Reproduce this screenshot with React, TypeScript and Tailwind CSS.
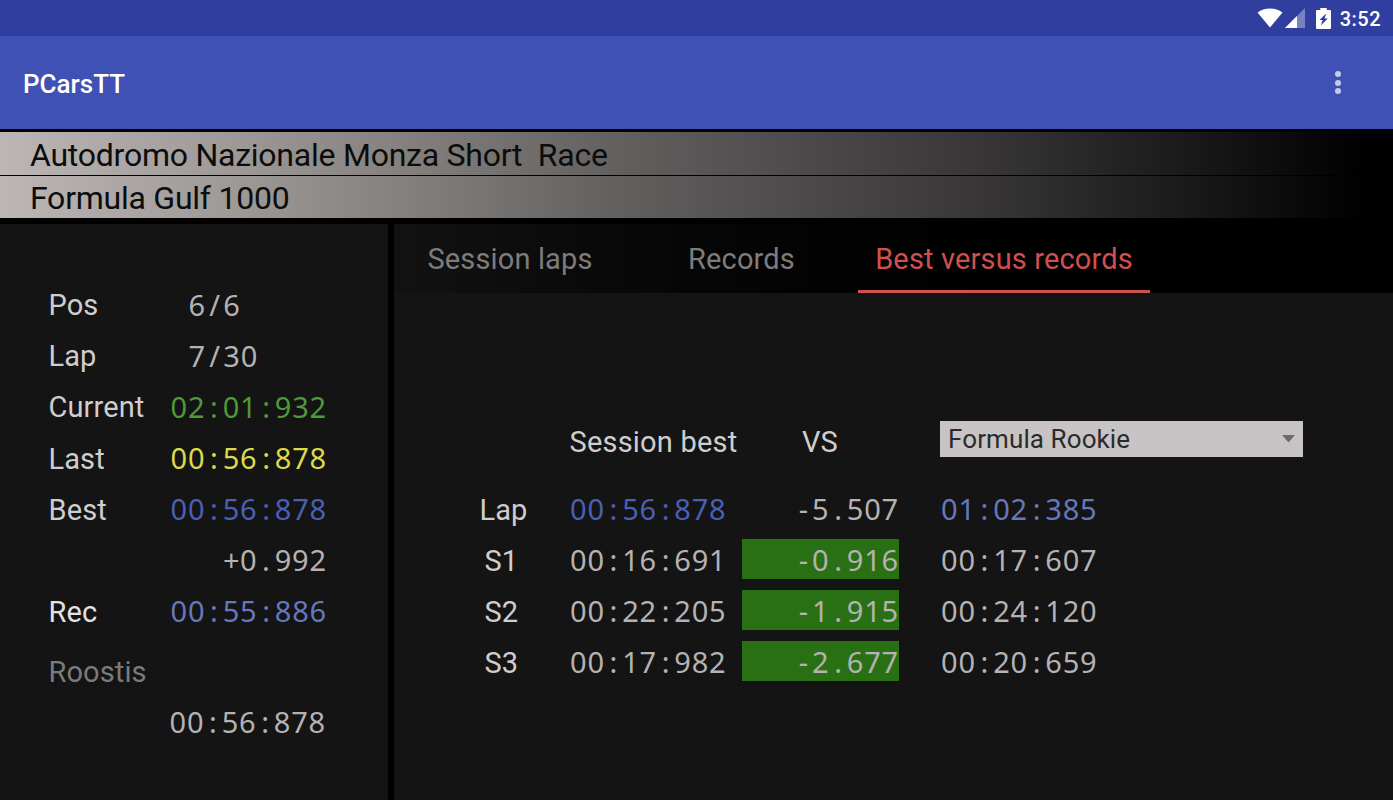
import clsx from 'clsx';

interface ITimingRow {
  label?: string;
  value: string;
  labelClass?: string;
  valueClass: string;
}

interface ISectorRow {
  label: string;
  best: string;
  delta: string;
  record: string;
  isLap?: boolean;
}

const TIMING_ROWS: ITimingRow[] = [
  { label: 'Pos', value: '6/6', valueClass: 'pl-[18px] text-[#b4b2b2]' },
  { label: 'Lap', value: '7/30', valueClass: 'pl-[18px] text-[#b4b2b2]' },
  { label: 'Current', value: '02:01:932', valueClass: 'text-[#4d9a37]' },
  { label: 'Last', value: '00:56:878', valueClass: 'text-[#dcd94c]' },
  { label: 'Best', value: '00:56:878', valueClass: 'text-[#4a5fb8]' },
  { value: '+0.992', valueClass: 'pl-[52px] text-[#b4b2b2]' },
  { label: 'Rec', value: '00:55:886', labelClass: 'text-[#e4e1e1]', valueClass: 'text-[#6678bc]' },
];

const SECTOR_ROWS: ISectorRow[] = [
  { label: 'Lap', best: '00:56:878', delta: '-5.507', record: '01:02:385', isLap: true },
  { label: 'S1', best: '00:16:691', delta: '-0.916', record: '00:17:607' },
  { label: 'S2', best: '00:22:205', delta: '-1.915', record: '00:24:120' },
  { label: 'S3', best: '00:17:982', delta: '-2.677', record: '00:20:659' },
];

// Fixed-pitch digits: punctuation gets the same cell width as a digit.
function Mono({ text, className }: { text: string; className?: string }): React.ReactElement {
  return (
    <span className={clsx("whitespace-nowrap font-['Noto_Sans','Open_Sans',sans-serif] text-[29px] tracking-[0.8px]", className)}>
      {text.split(/([^0-9])/).map((part, i) =>
        /^[^0-9]$/.test(part) ? (
          <span key={i} className="inline-block w-[17.4px] text-center tracking-normal">{part}</span>
        ) : (
          part
        ),
      )}
    </span>
  );
}

function StatusBar(): React.ReactElement {
  return (
    <div className="flex h-9 items-center justify-end bg-[#303f9f] pr-3 text-white">
      <svg width="26" height="20" viewBox="0 0 26 20" fill="currentColor">
        <path d="M0.500 4.600C4 1.900 8.300 0.500 13 0.500S22 1.900 25.500 4.600L13 19.600Z" />
      </svg>
      <svg className="ml-0.5" width="20" height="20" viewBox="0 0 20 20" fill="currentColor">
        <path d="M20 0V20H0Z" fillOpacity="0.35" />
        <path d="M12 8V20H0Z" />
      </svg>
      <svg className="ml-[11px]" width="15" height="21" viewBox="0 0 14 21" preserveAspectRatio="none" fill="currentColor">
        <path fillRule="evenodd" d="M4 0H10V2H13Q14 2 14 3V20Q14 21 13 21H1Q0 21 0 20V3Q0 2 1 2H4ZM9.500 5.500L3.200 12H6.200L4.500 17.500L11 10.500H8Z" />
      </svg>
      <span className="ml-[9px] pt-0.5 text-xl font-medium tracking-[0.5px]">3:52</span>
    </div>
  );
}

function AppBar(): React.ReactElement {
  return (
    <div className="flex h-[93px] items-center justify-between bg-[#3f51b5] pl-[23px] pr-[52px]">
      <h1 className="pt-[3px] text-[26px] font-medium text-white">PCarsTT</h1>
      <div className="flex flex-col gap-[2.500px]">
        <i className="size-1.5 rounded-full bg-[#c5cbe9]" />
        <i className="size-1.5 rounded-full bg-[#c5cbe9]" />
        <i className="size-1.5 rounded-full bg-[#c5cbe9]" />
      </div>
    </div>
  );
}

function TitleRow({ children }: { children: string }): React.ReactElement {
  return (
    <div className="flex items-center whitespace-pre bg-[linear-gradient(to_right,#bcb6b5_0%,#9d9997_17%,#83807e_29%,#656361_43%,#4b494a_58%,#353334_72%,#1c1c1c_84%,#000_98%)] pl-[30px] pt-0.5 text-[32px] tracking-[-0.240px] text-[#0c0c0c]">
      {children}
    </div>
  );
}

function TimingPanel(): React.ReactElement {
  return (
    <aside className="w-[388px] shrink-0 bg-[#141414] pl-[48.500px] pt-[55.500px]">
      {TIMING_ROWS.map((row, i) => (
        <div key={i} className="flex h-[51.100px] items-center">
          <span className={clsx('w-[122px] pt-0.5 tracking-[0.1px]', row.labelClass)}>{row.label}</span>
          <Mono text={row.value} className={clsx('pb-[1.500px]', row.valueClass)} />
        </div>
      ))}
      <div className="mt-[9px] flex h-[51px] items-center pt-0.5 tracking-[0.1px] text-[#7b7a7a]">Roostis</div>
      <div className="flex h-[51px] items-center pl-[121px]">
        <Mono text="00:56:878" className="pb-0.5 text-[#b4b2b2]" />
      </div>
    </aside>
  );
}

function Tabs(): React.ReactElement {
  return (
    <nav className="flex h-[69px] bg-gradient-to-r from-[#121212] to-black to-90% tracking-[0.150px] text-[#7d7c7c]">
      <span className="flex w-[232px] items-center justify-center pt-0.5">Session laps</span>
      <span className="flex w-[231px] items-center justify-center pt-0.5">Records</span>
      <span className="ml-px flex w-[292px] items-center justify-center border-b-[3px] border-[#d0504f] pt-[5px] text-[#d0504f]">
        Best versus records
      </span>
    </nav>
  );
}

function VersusTable(): React.ReactElement {
  return (
    <div className="pt-[123px]">
      <div className="flex h-[51px] pl-[175.500px]">
        <span className="w-[232.500px] pt-px leading-[51px] tracking-[0.2px]">Session best</span>
        <span className="w-[138px] pt-px leading-[51px]">VS</span>
        <div className="mt-[5px] flex h-[35.500px] w-[363px] items-center justify-between bg-[#c8c4c5] px-2 text-[26px] text-[#2c2b2b]">
          <span className="pt-0.5 tracking-[0.1px]">Formula Rookie</span>
          <svg width="13" height="8" viewBox="0 0 13 8" fill="#6d6b6b">
            <path d="M0 0H13L6.500 7.500Z" />
          </svg>
        </div>
      </div>
      <div className="pt-[16px]">
        {SECTOR_ROWS.map((row) => (
          <div key={row.label} className="flex h-[51.100px] items-center">
            <span className={clsx('w-[176px] pt-1 tracking-[0.1px]', row.isLap ? 'pl-[85.500px]' : 'pl-[90.500px]')}>{row.label}</span>
            <Mono text={row.best} className={clsx('w-[172px]', row.isLap ? 'text-[#4a5fb8]' : 'text-[#b4b2b2]')} />
            <div className={clsx('mb-px flex h-10 w-[157px] items-center justify-end', !row.isLap && 'bg-[#297014]')}>
              <Mono text={row.delta} className="pt-px text-[#b4b2b2]" />
            </div>
            <Mono text={row.record} className={clsx('ml-[42px]', row.isLap ? 'text-[#6678bc]' : 'text-[#b4b2b2]')} />
          </div>
        ))}
      </div>
    </div>
  );
}

export default function App(): React.ReactElement {
  return (
    <div className="flex h-[800px] w-[1393px] flex-col overflow-hidden bg-black font-['Roboto',sans-serif] text-[29px] text-[#d0cdcd]">
      <StatusBar />
      <AppBar />
      <div className="mt-[3px] mb-1.5 grid h-[86px] grid-rows-[43px_42px] gap-px">
        <TitleRow>Autodromo Nazionale Monza Short  Race</TitleRow>
        <TitleRow>Formula Gulf 1000</TitleRow>
      </div>
      <div className="flex flex-1 gap-1.5">
        <TimingPanel />
        <main className="flex-1 bg-[#141414]">
          <Tabs />
          <VersusTable />
        </main>
      </div>
    </div>
  );
}
